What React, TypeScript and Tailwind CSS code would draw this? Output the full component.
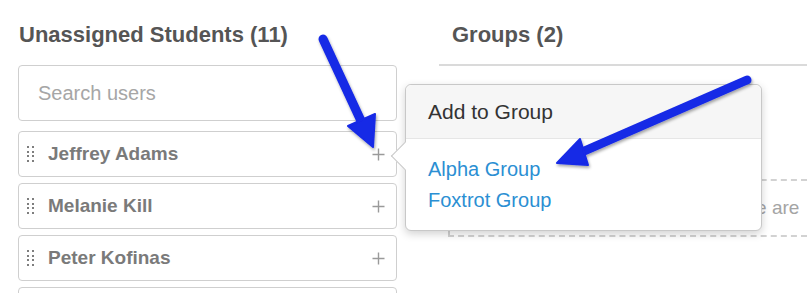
import React from "react";

const students = ["Jeffrey Adams", "Melanie Kill", "Peter Kofinas"];

function DragHandle() {
  return (
    <div className="grid grid-cols-2 gap-x-[3px] gap-y-[2.5px]">
      {Array.from({ length: 8 }).map((_, i) => (
        <span key={i} className="block h-[2px] w-[2px] bg-[#7e7e7e]" />
      ))}
    </div>
  );
}

function Plus() {
  return (
    <svg width="13" height="13" viewBox="0 0 13 13" className="text-[#9a9a9a]">
      <path d="M6.5 0.5v12M0.5 6.5h12" stroke="currentColor" strokeWidth="1.4" />
    </svg>
  );
}

function StudentRow({ name }: { name?: string }) {
  return (
    <div className="flex h-[46px] shrink-0 items-center rounded-[4px] border border-[#cfcfcf] bg-white pl-[8px] pr-[11px]">
      <DragHandle />
      <span className="ml-[14px] text-[19px] font-bold text-[#7a7a7a]">{name}</span>
      <span className="ml-auto flex">
        <Plus />
      </span>
    </div>
  );
}

function Arrows() {
  return (
    <svg className="pointer-events-none absolute left-0 top-0" width="807" height="293">
      <defs>
        <filter id="sh" x="-20%" y="-20%" width="140%" height="140%">
          <feDropShadow dx="1" dy="2" stdDeviation="1.5" floodColor="#000" floodOpacity="0.35" />
        </filter>
      </defs>
      <g filter="url(#sh)" fill="#1529e6" stroke="#1529e6">
        <line x1="323" y1="39" x2="362" y2="123" strokeWidth="9" strokeLinecap="round" />
        <polygon points="373,147 375,114 348,126" strokeWidth="2" strokeLinejoin="round" />
        <line x1="747" y1="80" x2="582" y2="152" strokeWidth="9" strokeLinecap="round" />
        <polygon points="557,163 580,139 588,165" strokeWidth="2" strokeLinejoin="round" />
      </g>
    </svg>
  );
}

export default function App() {
  return (
    <div
      className="relative h-[293px] w-[807px] overflow-hidden bg-white"
      style={{ fontFamily: '"Liberation Sans", Arial, sans-serif' }}
    >
      <div className="flex pl-[18px] pt-[23px]">
        <div className="flex w-[379px] shrink-0 flex-col">
          <h2 className="h-[24px] pl-[1px] text-[22px] font-bold leading-[24px] text-[#555]">
            Unassigned Students (11)
          </h2>
          <div className="mt-[18px] flex h-[56px] items-center rounded-[4px] border border-[#cfcfcf] pl-[19px] text-[20px] text-[#a6a6a6]">
            Search users
          </div>
          <div className="mt-[10px] flex flex-col gap-[6px]">
            {students.map((s) => (
              <StudentRow key={s} name={s} />
            ))}
            <StudentRow />
          </div>
        </div>
        <div className="ml-[42px] flex flex-1 flex-col">
          <div className="h-[43px] border-b-2 border-[#dadada] pl-[13px]">
            <h2 className="h-[24px] text-[22px] font-bold leading-[24px] text-[#555]">Groups (2)</h2>
          </div>
          <div className="ml-[9px] mt-[113px] flex h-[58px] items-center overflow-hidden whitespace-nowrap border-y-2 border-l-2 border-dashed border-[#d2d2d2] pl-[267px] text-[19px] text-[#a4a4a4]">
            There are
          </div>
        </div>
      </div>

      <div className="absolute left-[405px] top-[84px] w-[357px] rounded-[6px] border border-[#c8c8c8] bg-white shadow-[0_3px_8px_rgba(0,0,0,0.18)]">
        <div className="absolute left-[-11px] top-[61px] h-[20px] w-[20px] rotate-45 border-b border-l border-[#c8c8c8] bg-white" />
        <div className="relative flex h-[54px] items-center rounded-t-[6px] border-b border-[#e6e6e6] bg-[#f6f6f6] pl-[22px] text-[21px] text-[#333]">
          Add to Group
        </div>
        <div className="relative flex flex-col pb-[14px] pl-[22px] pt-[15px] text-[20px] leading-[31px] text-[#2b8fd3]">
          <span>Alpha Group</span>
          <span>Foxtrot Group</span>
        </div>
      </div>

      <Arrows />
    </div>
  );
}
